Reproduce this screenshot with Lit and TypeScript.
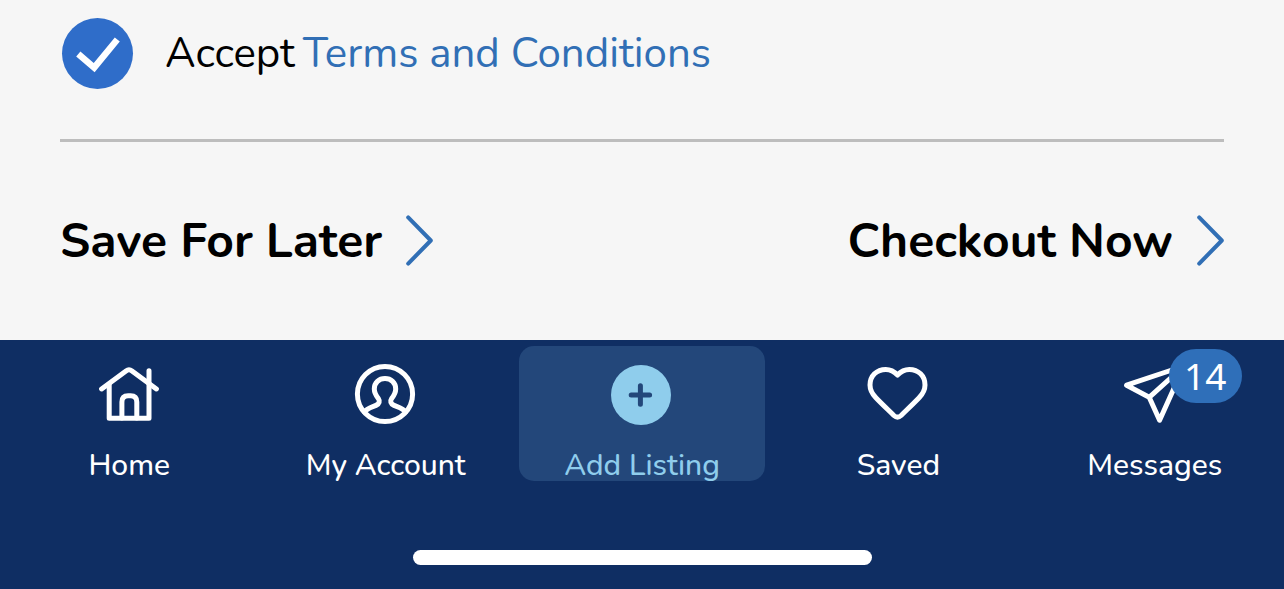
import { LitElement, html, css, svg } from "lit";
import { customElement, state } from "lit/decorators.js";
import { classMap } from "lit/directives/class-map.js";

interface Tab {
  id: string;
  label: string;
  badge?: number;
}

const TABS: Tab[] = [
  { id: "home", label: "Home" },
  { id: "account", label: "My Account" },
  { id: "add", label: "Add Listing" },
  { id: "saved", label: "Saved" },
  { id: "messages", label: "Messages", badge: 14 },
];

const ICONS: Record<string, unknown> = {
  home: svg`
    <path d="M2.6 24.9 L27 6.9 Q30 4.6 33 6.9 L57.4 24.9" />
    <path d="M10.2 21 V54.2 H50 V6.8" />
    <path d="M22.9 54 V38 Q22.9 31.8 29.1 31.8 H31.6 Q37.8 31.8 37.8 38 V54" />`,
  account: svg`
    <circle cx="29" cy="30" r="27.6" />
    <path d="M8.5 48 C11 44 16 43.2 20 41.4 C23.6 39.8 24 37 22.4 34.6 C20 31.6 18.3 29 18.3 25 C18.3 18.6 23 14.6 29 14.6 C35 14.6 39.7 18.6 39.7 25 C39.7 29 38 31.6 35.6 34.6 C34 37 34.4 39.8 38 41.4 C42 43.2 47 44 49.5 48" />`,
  add: svg`
    <circle class="disc" cx="29" cy="31" r="30" />
    <path class="plus" d="M28.4 21.8 V40.2 M19.2 31 H37.6" />`,
  saved: svg`
    <path d="M29.5 11 C26 7.2 22.2 5.4 17.8 5.4 C8.6 5.4 2 12 2 21 C2 26.4 4.1 29.8 7.9 33.8 C13.5 39.7 20.1 45.8 25.9 51.5 Q29.5 54.8 33.1 51.5 C38.9 45.8 45.5 39.7 51.1 33.8 C54.9 29.8 57 26.4 57 21 C57 12 50.5 5.4 41.3 5.4 C36.9 5.4 33.1 7.2 29.5 11 Z" />`,
  messages: svg`
    <path d="M1.6 21.2 L59 2 L34.6 56.2 L24.2 33.3 Z M24.2 33.3 L59 2" />`,
};

@customElement("app-root")
export class AppRoot extends LitElement {
  static styles = css`
    :host {
      display: flex;
      flex-direction: column;
      min-height: 100vh;
      background: #f6f6f6;
      color: #000;
      font-family: Nunito, "Noto Sans", sans-serif;
    }
    button {
      border: 0;
      padding: 0;
      background: none;
      color: inherit;
      font: inherit;
      cursor: pointer;
    }
    svg {
      display: block;
      flex: none;
      overflow: visible;
      fill: none;
      stroke: currentColor;
      stroke-linecap: round;
      stroke-linejoin: round;
    }
    .content {
      padding: 18px 60px 72px;
    }
    .terms {
      display: flex;
      align-items: center;
      font-size: 42px;
      line-height: 71px;
      padding: 0 2px;
      margin-bottom: 50px;
    }
    .accept {
      display: flex;
      align-items: center;
      gap: 32px;
    }
    .check {
      display: grid;
      color: #fff;
    }
    .check > * {
      grid-area: 1 / 1;
    }
    .box {
      appearance: none;
      width: 71px;
      height: 71px;
      margin: 0;
      border-radius: 50%;
      background: #c4c4c4;
    }
    .box:checked {
      background: #2f6dc9;
    }
    .tick {
      pointer-events: none;
      stroke-width: 6.5;
      stroke-linecap: butt;
      stroke-linejoin: miter;
    }
    .link {
      margin-left: 8px;
      color: #316fb5;
      text-decoration: none;
    }
    .rule {
      height: 3px;
      margin: 0 0 72px;
      border: 0;
      background: #bdbdbd;
    }
    .actions {
      display: flex;
      justify-content: space-between;
    }
    .action {
      display: flex;
      align-items: center;
      gap: 23px;
      font-size: 48px;
      font-weight: 700;
      line-height: 54px;
    }
    .chevron {
      color: #316fb5;
      stroke-width: 4;
    }
    .tabbar {
      flex: 1;
      display: flex;
      flex-direction: column;
      justify-content: space-between;
      align-items: center;
      padding: 6px 0 24px;
      background: #0f2e63;
      color: #fff;
    }
    .tabs {
      display: grid;
      grid-template-columns: repeat(5, 1fr);
      gap: 10px;
      width: 100%;
      box-sizing: border-box;
      padding: 0 6px;
    }
    .tab {
      display: flex;
      flex-direction: column;
      align-items: center;
      gap: 22px;
      padding: 18px 0 0;
      height: 135px;
      border-radius: 15px;
      font-size: 30px;
      font-weight: 500;
      line-height: 40px;
      white-space: nowrap;
    }
    .tab.active {
      background: #23477a;
      color: #8fcdec;
    }
    .icon {
      position: relative;
      stroke-width: 5;
    }
    .disc {
      fill: currentColor;
      stroke: none;
    }
    .plus {
      stroke: #23477a;
    }
    .badge {
      position: absolute;
      left: 44px;
      top: -15px;
      width: 73px;
      border-radius: 27px;
      background: #2f6fb9;
      font-family: "Noto Sans", sans-serif;
      font-size: 37px;
      font-weight: 400;
      line-height: 54px;
      text-align: center;
    }
    .indicator {
      width: 459px;
      height: 15px;
      border-radius: 8px;
      background: #fff;
    }
  `;

  @state() private accepted = true;
  @state() private active = "add";

  private renderChevron() {
    return html`<svg class="chevron" width="28" height="52" viewBox="0 0 28 52" aria-hidden="true">
      <path d="M3.2 2.4 L25.8 25.5 L3.2 48.6" />
    </svg>`;
  }

  private renderTab(tab: Tab) {
    return html`<button
      type="button"
      class=${classMap({ tab: true, active: tab.id === this.active })}
      @click=${() => (this.active = tab.id)}
    >
      <span class="icon">
        <svg width="60" height="60" viewBox="0 0 60 60" aria-hidden="true">${ICONS[tab.id]}</svg>
        ${tab.badge ? html`<span class="badge">${tab.badge}</span>` : null}
      </span>
      <span>${tab.label}</span>
    </button>`;
  }

  render() {
    return html`
      <main class="content">
        <div class="terms">
          <label class="accept">
            <span class="check">
              <input
                class="box"
                type="checkbox"
                .checked=${this.accepted}
                @change=${(e: Event) => (this.accepted = (e.target as HTMLInputElement).checked)}
              />
              <svg class="tick" width="71" height="71" viewBox="0 0 71 71" aria-hidden="true">
                <path d="M16.3 36 L32.2 49.6 L55.3 21.5" />
              </svg>
            </span>
            <span>Accept</span>
          </label>
          <a class="link" href="#terms">Terms and Conditions</a>
        </div>
        <hr class="rule" />
        <div class="actions">
          <button type="button" class="action">Save For Later ${this.renderChevron()}</button>
          <button type="button" class="action">Checkout Now ${this.renderChevron()}</button>
        </div>
      </main>
      <nav class="tabbar">
        <div class="tabs">${TABS.map((tab) => this.renderTab(tab))}</div>
        <div class="indicator"></div>
      </nav>
    `;
  }
}
